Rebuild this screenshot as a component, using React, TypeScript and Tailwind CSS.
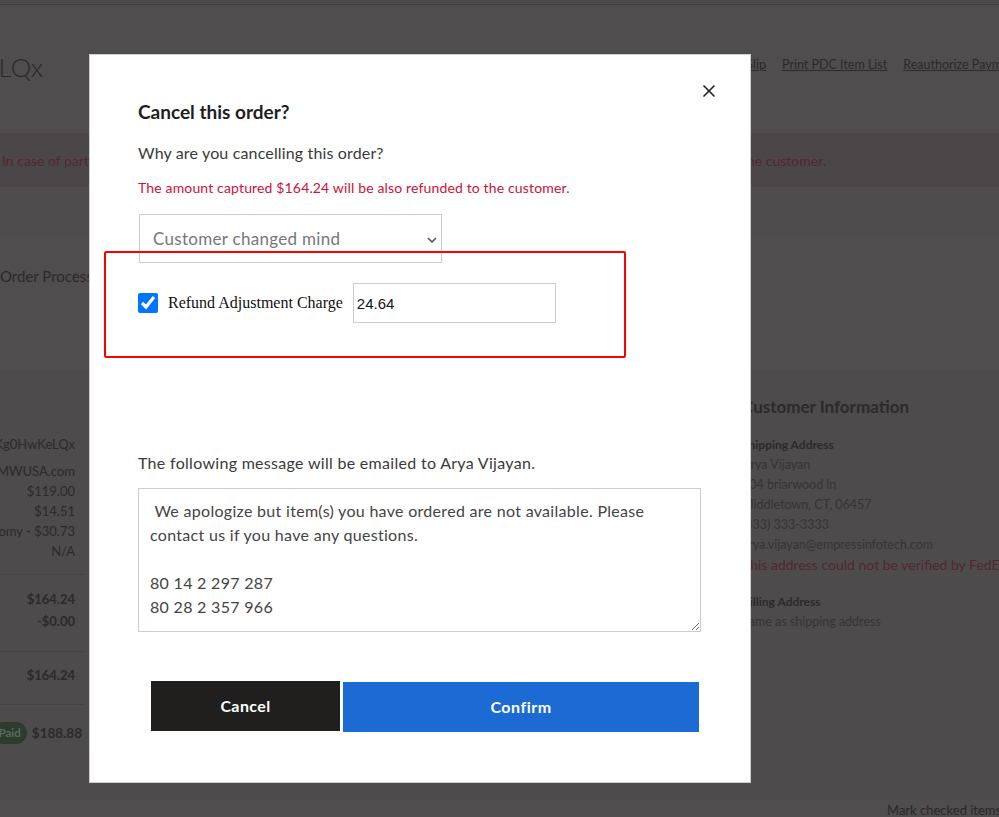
import { X } from "lucide-react";

const LEFT_ROWS = [
  "customerservice@BMWUSA.com",
  "$119.00",
  "$14.51",
  "FedEx Economy - $30.73",
  "N/A",
];

const ADDRESS_LINES = [
  "Arya Vijayan",
  "104 briarwood ln",
  "Middletown, CT, 06457",
  "(333) 333-3333",
  "arya.vijayan@empressinfotech.com",
];

const MESSAGE =
  " We apologize but item(s) you have ordered are not available. Please\ncontact us if you have any questions.\n\n80 14 2 297 287\n80 28 2 357 966";

function BackgroundPage() {
  return (
    <div className="w-[999px] h-[817px] bg-[#4f4d4e] text-[#2c2a2b]">
      <div className="h-[5px] bg-[#4a4849] border-b border-[#3f3d3e]" />

      {/* header */}
      <div className="h-[128px] flex items-start whitespace-nowrap">
        <div className="w-[43px] flex justify-end pt-[46px]">
          <span className="text-[26px] leading-[32px] font-light">Order Kg0HwKeLQx</span>
        </div>
        <div className="ml-[657px] mt-[50px] flex gap-[16px] text-[12.5px] leading-[20px]">
          <div className="w-[66px] flex justify-end">
            <span className="underline">Print Packing Slip</span>
          </div>
          <span className="underline">Print PDC Item List</span>
          <span className="underline">Reauthorize Payment</span>
        </div>
      </div>

      {/* alert */}
      <div className="h-[54px] bg-[#4b4647] flex items-center whitespace-nowrap text-[14px] text-[#55282f]">
        <div className="w-[87px] pl-[2px]">In case of partial cancellation</div>
        <div className="ml-[664px] w-[75px] flex justify-end">
          <span>will be refunded to the customer.</span>
        </div>
      </div>

      <div className="h-[50px] bg-[#4e4c4d]" />

      <div className="h-[133px] pt-[27px] whitespace-nowrap">
        <span className="text-[15px] leading-[20px]">Order Processing</span>
      </div>

      {/* main */}
      <div className="h-[430px] flex bg-[#4d4b4c] whitespace-nowrap">
        <div className="w-[84px] pt-[64px] text-[13px] leading-[20px]">
          <div className="flex justify-end pr-[9px]">
            <span>Kg0HwKeLQx</span>
          </div>
          <div className="mt-[7px]">
            {LEFT_ROWS.map((row) => (
              <div key={row} className="flex justify-end pr-[9px]">
                <span>{row}</span>
              </div>
            ))}
          </div>
          <div className="mt-[13px] border-t border-[#454344]" />
          <div className="mt-[13px] font-bold leading-[22px]">
            <div className="flex justify-end pr-[9px]">$164.24</div>
            <div className="flex justify-end pr-[9px]">-$0.00</div>
          </div>
          <div className="mt-[19px] border-t border-[#454344]" />
          <div className="mt-[12px] font-bold leading-[22px] flex justify-end pr-[9px]">$164.24</div>
          <div className="mt-[18px] border-t border-[#454344]" />
          <div className="mt-[17px] flex justify-end items-center gap-[5px] pr-[2px]">
            <span className="rounded-full bg-[#2c3d2f] text-[#5a6b5c] text-[11.5px] font-bold leading-[22px] px-[6px]">
              Paid
            </span>
            <span className="text-[13.5px] font-bold">$188.88</span>
          </div>
        </div>

        <div className="ml-[658px] pt-[25px]">
          <div className="text-[17px] leading-[24px] font-bold">Customer Information</div>
          <div className="mt-[16px] text-[12px] leading-[20px] font-bold">Shipping Address</div>
          {ADDRESS_LINES.map((line) => (
            <div key={line} className="text-[12.5px] leading-[20px] text-[#363435]">
              {line}
            </div>
          ))}
          <div className="text-[14px] leading-[20px] text-[#53282e]">
            This address could not be verified by FedEx
          </div>
          <div className="mt-[17px] text-[12px] leading-[20px] font-bold">Billing Address</div>
          <div className="text-[12.5px] leading-[20px] text-[#363435]">Same as shipping address</div>
        </div>
      </div>

      <div className="pl-[887px] text-[13px] leading-[20px] whitespace-nowrap text-[#2a2829]">
        Mark checked items as shipped
      </div>
    </div>
  );
}

function CancelOrderModal() {
  return (
    <div className="absolute left-[89px] top-[54px] w-[662px] h-[729px] bg-white border border-[#cfcfcf] pl-[48px] pt-[45px] text-[#333]">
      <button type="button" className="absolute right-[31px] top-[26px] text-[#222]">
        <X className="w-[20px] h-[20px]" strokeWidth={2} />
      </button>

      <h2 className="text-[19px] leading-[24px] font-bold text-[#1e1e1e]">Cancel this order?</h2>
      <p className="mt-[17px] text-[16px] leading-[24px] tracking-[0.15px] text-[#3a3a3a]">
        Why are you cancelling this order?
      </p>
      <p className="mt-[14px] text-[14px] leading-[18px] tracking-[0.15px] text-[#d0103a]">
        The amount captured $164.24 will be also refunded to the customer.
      </p>

      <div className="relative mt-[17px] ml-px w-[303px] h-[49px]">
        <select
          defaultValue="mind"
          className="appearance-none w-full h-full border border-[#cccccc] pl-[13px] text-[17px] tracking-[0.3px] text-[#777] bg-white outline-none"
        >
          <option value="mind">Customer changed mind</option>
          <option value="stock">Out of stock</option>
        </select>
        <svg
          className="absolute right-[5px] top-[23px] pointer-events-none"
          width="10"
          height="6"
          viewBox="0 0 10 6"
          fill="none"
        >
          <path d="M1 1l4 4 4-4" stroke="#555" strokeWidth="1.6" />
        </svg>
      </div>

      <div className="mt-[20px] h-[40px] flex items-center">
        <input type="checkbox" defaultChecked className="w-5 h-5 m-0 accent-[#0075ff]" />
        <label className="ml-[10px] font-['Liberation_Serif',serif] text-[16px] text-[#111]">
          Refund Adjustment Charge
        </label>
        <input
          type="text"
          defaultValue="24.64"
          className="ml-[10px] w-[203px] h-[40px] border border-[#cccccc] pl-[3px] font-['Liberation_Sans',sans-serif] text-[15px] text-[#111] outline-none"
        />
      </div>

      <p className="mt-[128px] text-[16px] leading-[24px] tracking-[0.3px] text-[#3a3a3a]">
        The following message will be emailed to Arya Vijayan.
      </p>
      <textarea
        defaultValue={MESSAGE}
        className="mt-[13px] block w-[563px] h-[144px] border border-[#cccccc] px-[11px] pt-[10px] text-[16px] leading-[24px] tracking-[0.3px] text-[#444] resize-y outline-none"
      />

      <div className="mt-[49px] ml-[13px] flex items-start gap-[3px]">
        <button
          type="button"
          className="w-[189px] h-[50px] bg-[#211f1e] text-white text-[16px] font-bold tracking-[0.4px]"
        >
          Cancel
        </button>
        <button
          type="button"
          className="mt-px w-[356px] h-[50px] bg-[#1c6ad4] text-white text-[16px] font-bold tracking-[0.5px]"
        >
          Confirm
        </button>
      </div>

      {/* annotation box */}
      <div className="absolute left-[14px] top-[196px] w-[522px] h-[107px] border-2 border-[#ff0000] rounded-[2px] pointer-events-none" />
    </div>
  );
}

export default function App() {
  return (
    <div className="relative w-[999px] h-[817px] overflow-hidden font-['Lato',sans-serif]">
      <BackgroundPage />
      <CancelOrderModal />
    </div>
  );
}
